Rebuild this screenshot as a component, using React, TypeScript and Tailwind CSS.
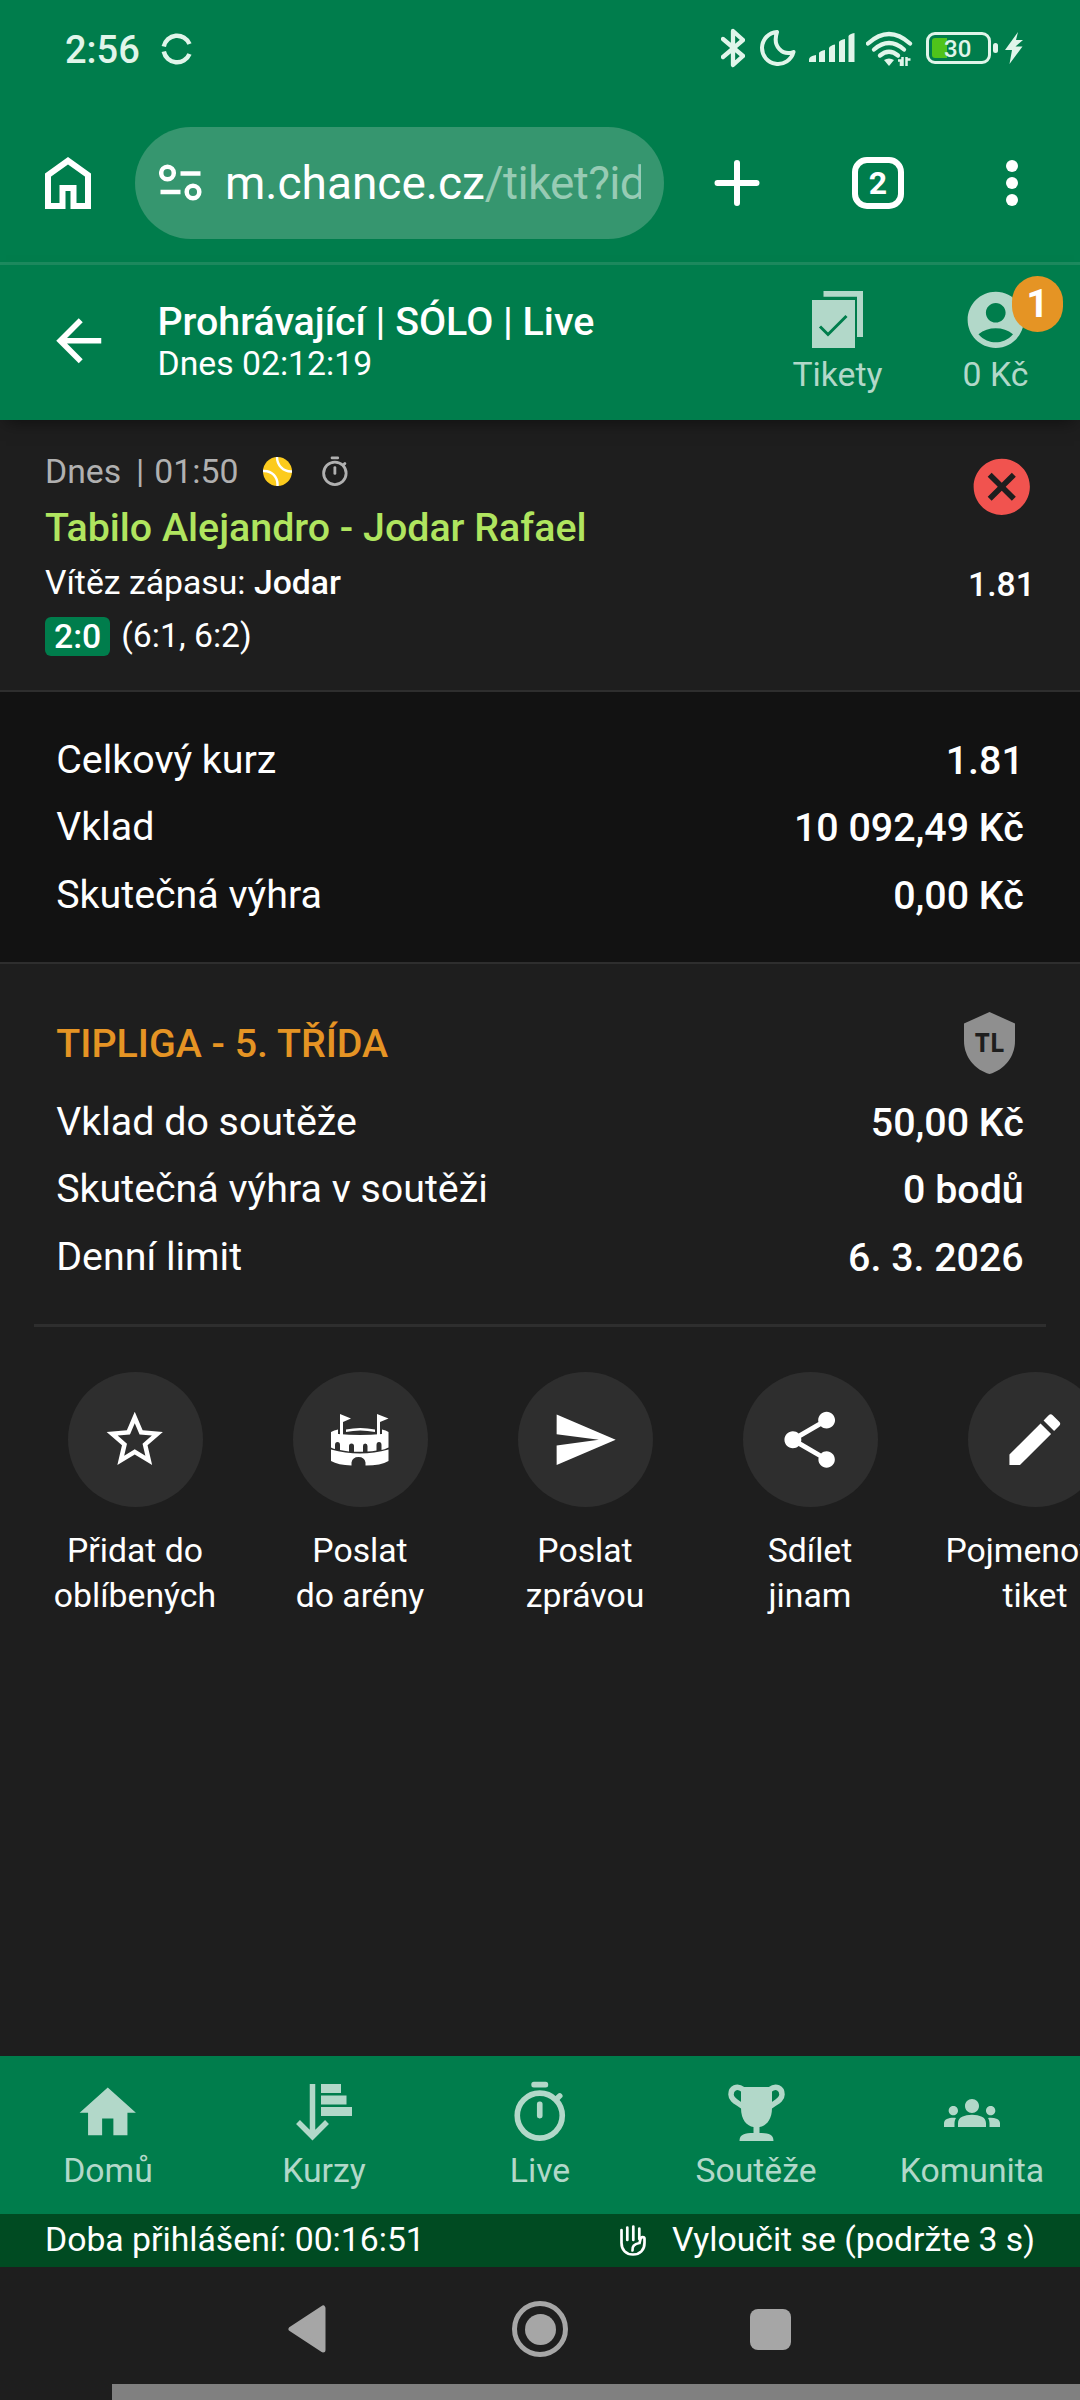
import React from 'react';
import {
    MdAccountCircle,
    MdArrowBack,
    MdCancel,
    MdEdit,
    MdGroups,
    MdHome,
    MdSend,
    MdShare,
    MdStarBorder,
} from 'react-icons/md';

type IconProps = { className?: string };

const ArenaIcon = ({ className }: IconProps) => (
    <svg viewBox="0 0 58 52" className={className} fill="currentColor">
        <path d="M9 0 20 4.5 12 8V21H9ZM46 0 57.500 4.500 49 8V21H46Z" />
        <path d="M15 15.500Q29 12.500 44 15.500V18Q29 15 15 18Z" />
        <path d="M0 18Q3 16 7 15.500V20Q29 22 51 20V15.500Q55 16 57.500 18V33.500Q53 35.500 50.500 36V31Q50.500 28 48 28T45.500 31V36.500Q41 37.400 36.500 37.400V32Q36.500 29.500 34.200 29.500T32 32V37.800H23V32Q23 29.500 20.500 29.500T18 32V37.400Q13 37 9 36V31Q9 28 6.500 28T4 31V35Q2 34.500 0 33.500Z" />
        <path d="M0 35.500Q29 43.500 57.500 35.500V47Q50 51.500 34.500 51.500V48.500Q33.500 43 27.500 43T20.500 48.500V51.500Q7 51 0 47Z" />
    </svg>
);

const TicketsIcon = ({ className }: IconProps) => (
    <svg viewBox="0 0 51 57" className={className} fill="currentColor">
        <path d="M11.500 0H51V46H45V5.800H11.500Z" />
        <path d="M0 9H43V57H0Z" />
        <path d="m8 35.500 8 8 18.500-18.500" fill="none" stroke="#007d4c" strokeWidth="3" />
    </svg>
);

const StopwatchIcon = ({ className }: IconProps) => (
    <svg viewBox="0 0 24 24" className={className} fill="currentColor">
        <circle cx="12" cy="13" r="8" fill="none" stroke="currentColor" strokeWidth="2" />
        <rect x="9" y="1" width="6" height="2" rx="0.900" />
        <rect x="11" y="8" width="2" height="6" rx="0.900" />
        <path d="M17.800 7.300 19.100 6" stroke="currentColor" strokeWidth="2" strokeLinecap="round" />
    </svg>
);

const OddsIcon = ({ className }: IconProps) => (
    <svg viewBox="0 0 56 57" className={className} fill="currentColor">
        <path d="M25 0H45V9H25ZM25 11.500H50.500V20.500H25ZM25 23H56V32H25Z" />
        <path d="M16.500 0V53M2 38 16.500 52.500 31 38" fill="none" stroke="currentColor" strokeWidth="5.500" />
    </svg>
);

const TrophyIcon = ({ className }: IconProps) => (
    <svg viewBox="0 0 57 57" className={className} fill="currentColor">
        <path d="M13 3H44V24C44 36 38 42 31.500 43V49C40 49 45.500 50 45.500 57H11.500C11.500 50 17 49 25.500 49V43C19 42 13 36 13 24Z" />
        <path d="M15 5.500C9 1 3 4 3 10.500C3 16 9 18 15 22.500" fill="none" stroke="currentColor" strokeWidth="5.500" />
        <path d="M42 5.500C48 1 54 4 54 10.500C54 16 48 18 42 22.500" fill="none" stroke="currentColor" strokeWidth="5.500" />
    </svg>
);

const HandIcon = ({ className }: IconProps) => (
    <svg viewBox="0 0 26 31" className={className} fill="none" stroke="currentColor" strokeWidth="2.700" strokeLinecap="round">
        <path d="M1.500 5V18C1.500 25 6 29.500 13 29.500S24.500 25 24.500 18V13.500C24.500 11.500 21 11.500 20.500 14L19.500 18C14 19 12 21.500 12.500 25.500" />
        <path d="M7.300 2.500V15M13.300 1.500V15M19.300 3.500V14" />
    </svg>
);

const TennisBall = ({ className }: IconProps) => (
    <svg viewBox="0 0 29 29" className={className}>
        <circle cx="14.500" cy="14.500" r="14.500" fill="#fccb1d" />
        <path d="M14 0C14 8 20 15 29 14.500M0 14C9 13.500 15 20 14.500 29" fill="none" stroke="#fff" strokeWidth="2.400" />
    </svg>
);

const ShieldIcon = ({ className }: IconProps) => (
    <svg viewBox="0 0 51 62" className={className}>
        <path d="M25.500 0 51 11.500V29C51 45 40 58 25.500 62C11 58 0 45 0 29V11.500Z" fill="#8f8f8f" />
        <text x="25.500" y="39.500" textAnchor="middle" fontSize="26" fontWeight="700" fill="#1e1e1e" className="font-['Open_Sans',sans-serif]">TL</text>
    </svg>
);

const totals = [
    { label: 'Celkový kurz', value: '1.81' },
    { label: 'Vklad', value: '10 092,49 Kč' },
    { label: 'Skutečná výhra', value: '0,00 Kč' },
];

const league = [
    { label: 'Vklad do soutěže', value: '50,00 Kč' },
    { label: 'Skutečná výhra v soutěži', value: '0 bodů' },
    { label: 'Denní limit', value: '6. 3. 2026' },
];

const actions = [
    { lines: ['Přidat do', 'oblíbených'], icon: MdStarBorder, size: 'w-[67.5px] h-[67.5px]' },
    { lines: ['Poslat', 'do arény'], icon: ArenaIcon, size: 'w-[58px] h-[52px]' },
    { lines: ['Poslat', 'zprávou'], icon: MdSend, size: 'w-[67.5px] h-[67.5px]' },
    { lines: ['Sdílet', 'jinam'], icon: MdShare, size: 'w-[67.5px] h-[67.5px]' },
    { lines: ['Pojmenovat', 'tiket'], icon: MdEdit, size: 'w-[67.5px] h-[67.5px]' },
];

const tabs = [
    { label: 'Domů', icon: MdHome, size: 'w-[67.5px] h-[67.5px]' },
    { label: 'Kurzy', icon: OddsIcon, size: 'w-[56px] h-[57px]' },
    { label: 'Live', icon: StopwatchIcon, size: 'w-[67.5px] h-[67.5px]' },
    { label: 'Soutěže', icon: TrophyIcon, size: 'w-[57px] h-[57px]' },
    { label: 'Komunita', icon: MdGroups, size: 'w-[56px] h-[56px]' },
];

function StatusBar() {
    return (
        <div className="flex h-[98px] items-center pl-[65px] pr-[57px] text-[#e0f5ea]">
            <span className="mt-[1px] text-[38px] leading-none font-medium">2:56</span>
            <svg viewBox="0 0 32 32" className="ml-[21px] -mt-[1px] h-8 w-8" fill="none" stroke="currentColor" strokeWidth="4.500">
                <path d="M2.800 13.500A13.500 13.500 0 0 1 28.500 11M2.800 18.500A13.500 13.500 0 0 0 28.500 21" />
            </svg>
            <svg viewBox="0 0 24 40" className="ml-auto -mt-[3px] h-10 w-6" fill="none" stroke="currentColor" strokeWidth="4.300" strokeLinejoin="round" strokeLinecap="round">
                <path d="M2 11 22 28 12 37V3L22 12 2 29" />
            </svg>
            <svg viewBox="0 0 36 36" className="ml-[15px] -mt-[2px] h-9 w-9" fill="none" stroke="currentColor" strokeWidth="4" strokeLinejoin="round">
                <path d="M17 2A16 16 0 1 0 33.500 22C23 26 12 17 17 2Z" />
            </svg>
            <svg viewBox="0 0 46 30" className="ml-[13px] -mt-[2px] h-[30px] w-[46px]" fill="currentColor">
                <path d="M0 29V26.500Q0 23 7 22V29ZM10 29V20Q11 18 16 17V29ZM20 29V15Q21 12.500 26 11.500V29ZM30 29V9Q31 7 36 6V29ZM39.500 29V3Q40.500 1 45.500 0V29Z" />
            </svg>
            <svg viewBox="0 0 48 36" className="ml-[11px] h-9 w-12" fill="none" stroke="currentColor" strokeWidth="4.300">
                <path d="M2 12.500Q23 -6.500 44 12.500" strokeLinecap="round" />
                <path d="M8 18.500Q23 5.500 38 18.500" strokeLinecap="round" />
                <path d="M14 24.500Q23 17 32 24.500" strokeLinecap="round" />
                <path d="m18 29 5 6 5-6q-5-3-10 0Z" fill="currentColor" stroke="none" />
                <path d="M32 29.500H35V35M36.500 26V35M40.500 35V26M41 28.500H44.500" strokeWidth="2.500" />
            </svg>
            <div className="-mt-[3px] ml-[12px] flex h-[32px] w-[65px] rounded-[9px] border-[3px] border-current p-[3px]">
                <div className="h-full w-[15px] rounded-l-[3px] bg-[#4fc31b]" />
                <span className="-ml-[3px] text-[24px] leading-[22px] font-medium text-[#e0f5ea]">30</span>
            </div>
            <div className="ml-[2px] -mt-[3px] h-[10px] w-[5px] rounded-full bg-current" />
            <svg viewBox="0 0 18 32" className="-mt-[2px] ml-[7px] h-8 w-[18px]" fill="currentColor">
                <path d="M13 0 0 18H7L4.500 32 17.500 14.500H10.500L18 8H11Z" />
            </svg>
        </div>
    );
}

function BrowserBar() {
    return (
        <div className="flex h-[167px] items-center border-b-[3px] border-[#1d8b5f] pt-[6px] pb-[1px] pl-[45px] text-white">
            <svg viewBox="0 0 46 52" className="h-[52px] w-[46px]" fill="none" stroke="currentColor" strokeWidth="6">
                <path d="M3 49V18L23 3.700 43 18V49H28.500V31H17.500V49Z" />
            </svg>
            <div className="ml-[44px] flex h-[112px] w-[529px] items-center rounded-full bg-[#36966f] pl-[24px]">
                <svg viewBox="0 0 43 37" className="h-[37px] w-[43px]" fill="none" stroke="currentColor" strokeWidth="4.500">
                    <circle cx="8.500" cy="9" r="6.300" />
                    <circle cx="34" cy="28" r="6.300" />
                    <path d="M21.500 9.500H41.500M1.500 28H21.500" />
                </svg>
                <div className="ml-[23px] w-[416px] overflow-hidden text-[46px] leading-[64px] whitespace-nowrap">
                    m.chance.cz<span className="tracking-[-0.7px] text-[#97cbb4]">/tiket?id</span>
                </div>
            </div>
            <svg viewBox="0 0 46 48" className="ml-[50px] h-12 w-[46px]" fill="none" stroke="currentColor" strokeWidth="6" strokeLinecap="round">
                <path d="M23 4V44M3.500 24H42.500" />
            </svg>
            <div className="ml-[92px] flex h-[52px] w-[52px] items-center justify-center rounded-[15px] border-[6px] border-white text-[32px] leading-none font-bold">
                2
            </div>
            <div className="ml-[102px] flex flex-col gap-[5px]">
                <div className="h-3 w-3 rounded-full bg-white" />
                <div className="h-3 w-3 rounded-full bg-white" />
                <div className="h-3 w-3 rounded-full bg-white" />
            </div>
        </div>
    );
}

function TicketHeader() {
    return (
        <header className="relative flex h-[155px] bg-[#007d4c] shadow-[0_8px_16px_-6px_rgba(0,0,0,0.5)]">
            <MdArrowBack className="mt-[42px] ml-[45px] h-[67.5px] w-[67.5px] text-white" />
            <div className="ml-[45px] pt-[34px] text-white">
                <h1 className="text-[39.375px] leading-[45px] font-medium">Prohrávající | SÓLO | Live</h1>
                <p className="text-[33.75px] leading-[39px]">Dnes 02:12:19</p>
            </div>
            <div className="ml-auto flex w-[135px] flex-col items-center pt-[26px] text-[#b2d8c9]">
                <TicketsIcon className="h-[57px] w-[51px]" />
                <span className="mt-[4px] text-[33.75px] leading-[45px]">Tikety</span>
            </div>
            <div className="relative mr-[17px] ml-[23px] flex w-[135px] flex-col items-center pt-[21px] text-[#b2d8c9]">
                <MdAccountCircle className="h-[67.5px] w-[67.5px]" />
                <span className="-mt-[1.5px] text-[33.75px] leading-[45px]">0 Kč</span>
                <span className="absolute top-[11px] right-0 flex h-[56px] w-[51px] items-center justify-center rounded-full bg-[#e59424] text-[39.4px] leading-none font-bold text-white">1</span>
            </div>
        </header>
    );
}

function Bet() {
    return (
        <section className="flex h-[272px] justify-between border-b-2 border-[#2e2e2e] pr-[50px] pl-[45px]">
            <div className="pt-[29px] text-[33.75px] leading-[45px] text-white">
                <div className="flex items-center text-[#b0b0b0]">
                    <span>Dnes</span>
                    <span className="ml-[15px]">|</span>
                    <span className="ml-[10px]">01:50</span>
                    <TennisBall className="ml-[25px] h-[29px] w-[29px]" />
                    <StopwatchIcon className="ml-[26px] h-[33.75px] w-[33.75px]" />
                </div>
                <h2 className="mt-[11px] text-[39.375px] font-medium text-[#b0e55f]">Tabilo Alejandro - Jodar Rafael</h2>
                <p className="mt-[10px]">Vítěz zápasu: <b className="font-medium">Jodar</b></p>
                <p className="mt-[8px] flex items-center">
                    <span className="mt-[2px] mr-[11px] h-[39px] rounded-[6px] bg-[#007d4c] px-[9px] leading-[40px] font-medium">2:0</span>
                    (6:1, 6:2)
                </p>
            </div>
            <div className="flex flex-col items-end pt-[33px] text-white">
                <MdCancel className="-mr-[5px] h-[67.5px] w-[67.5px] text-[#f1534f]" />
                <span className="mt-[41px] -mr-[5px] text-[33.75px] leading-[45px] font-medium">1.81</span>
            </div>
        </section>
    );
}

function Rows({ rows }: { rows: { label: string; value: string }[] }) {
    return (
        <dl>
            {rows.map((row) => (
                <div key={row.label} className="flex h-[67.5px] items-center justify-between text-[39.375px] text-white">
                    <dt>{row.label}</dt>
                    <dd className="mt-[2px] font-medium">{row.value}</dd>
                </div>
            ))}
        </dl>
    );
}

function Actions() {
    return (
        <div className="mt-[45px] flex overflow-hidden pl-[22.5px]">
            {actions.map(({ lines, icon: Icon, size }) => (
                <div key={lines[1]} className="flex w-[225px] shrink-0 flex-col items-center text-white">
                    <div className="flex h-[135px] w-[135px] items-center justify-center rounded-full bg-[#2e2e2e]">
                        <Icon className={size} />
                    </div>
                    <div className="mt-[21px] text-center text-[33.75px] leading-[45px]">
                        {lines[0]}<br />{lines[1]}
                    </div>
                </div>
            ))}
        </div>
    );
}

function BottomNav() {
    return (
        <nav className="grid h-[158px] grid-cols-5 bg-[#007d4c] text-[#b2d8c9]">
            {tabs.map(({ label, icon: Icon, size }) => (
                <div key={label} className="flex flex-col items-center pt-[23px]">
                    <div className="flex h-[67.5px] items-center">
                        <Icon className={size} />
                    </div>
                    <span className="mt-[1px] text-[33.75px] leading-[45px]">{label}</span>
                </div>
            ))}
        </nav>
    );
}

function SystemNav() {
    return (
        <div className="flex h-[117px] items-center pt-[7px] pl-[288px]">
            <svg viewBox="0 0 38 48" className="h-12 w-[38px]">
                <path d="M35 3V45L3 24Z" fill="#a6a6a6" stroke="#a6a6a6" strokeWidth="5" strokeLinejoin="round" />
            </svg>
            <div className="ml-[186px] flex h-[56px] w-[56px] items-center justify-center rounded-full border-[5px] border-[#a6a6a6]">
                <div className="h-[31px] w-[31px] rounded-full bg-[#a6a6a6]" />
            </div>
            <div className="ml-[182px] h-[41px] w-[41px] rounded-[8px] bg-[#a6a6a6]" />
        </div>
    );
}

export default function App() {
    return (
        <div className="flex h-[2400px] w-[1080px] flex-col overflow-hidden bg-[#1e1e1e] font-[Roboto,sans-serif]">
            <div className="bg-[#007d4c]">
                <StatusBar />
                <BrowserBar />
            </div>
            <TicketHeader />
            <Bet />
            <section className="h-[272px] border-b-2 border-[#2e2e2e] bg-[#121212] px-[56.25px] pt-[33.75px]">
                <Rows rows={totals} />
            </section>
            <section className="px-[56.25px] pt-[33.75px]">
                <div className="flex h-[90px] items-center justify-between">
                    <h3 className="mt-[1px] text-[39.375px] font-medium text-[#e59424]">TIPLIGA - 5. TŘÍDA</h3>
                    <ShieldIcon className="mr-[9px] h-[62px] w-[51px]" />
                </div>
                <Rows rows={league} />
            </section>
            <div className="mx-[34px] mt-[33.75px] h-[3px] shrink-0 bg-[#2e2e2e]" />
            <Actions />
            <div className="mt-auto">
                <BottomNav />
                <div className="flex h-[53px] items-center bg-[#004b22] px-[45px] pb-[3px] text-[33.75px] leading-[45px] text-white">
                    <span>Doba přihlášení: 00:16:51</span>
                    <HandIcon className="mt-[3px] ml-auto h-[31px] w-[26px]" />
                    <span className="ml-[26px]">Vyloučit se (podržte 3 s)</span>
                </div>
                <SystemNav />
                <div className="ml-[112px] h-4 bg-[#808080]" />
            </div>
        </div>
    );
}
